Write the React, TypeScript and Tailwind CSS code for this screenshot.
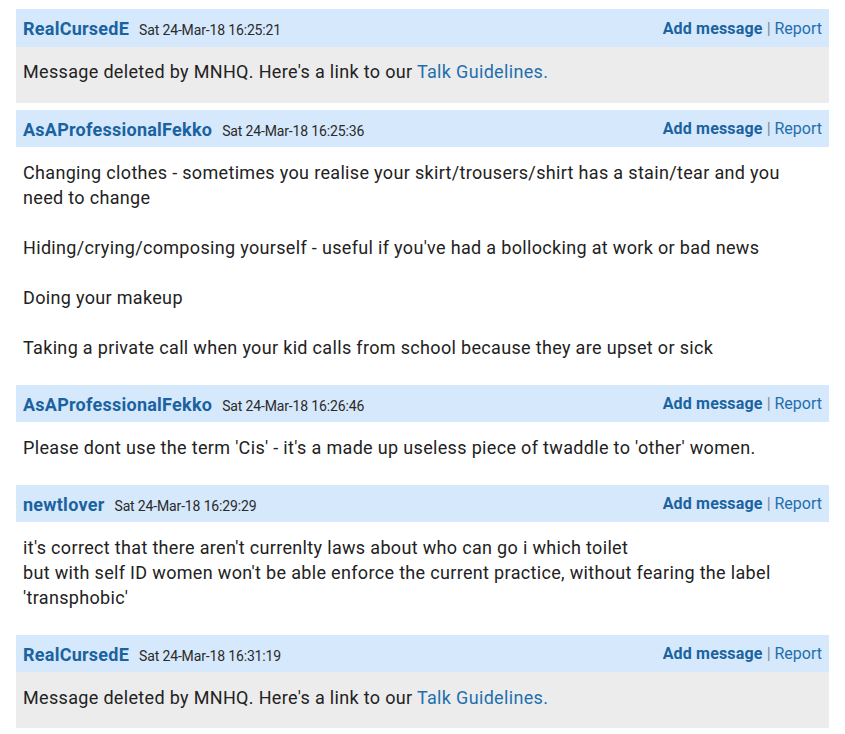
import React from "react";

type Post = {
  name: string;
  date: string;
  deleted?: boolean;
  body?: React.ReactNode;
};

const posts: Post[] = [
  { name: "RealCursedE", date: "Sat 24-Mar-18 16:25:21", deleted: true },
  {
    name: "AsAProfessionalFekko",
    date: "Sat 24-Mar-18 16:25:36",
    body: (
      <>
        Changing clothes - sometimes you realise your skirt/trousers/shirt has a stain/tear and you need to change
        <br />
        <br />
        Hiding/crying/composing yourself - useful if you've had a bollocking at work or bad news
        <br />
        <br />
        Doing your makeup
        <br />
        <br />
        Taking a private call when your kid calls from school because they are upset or sick
      </>
    ),
  },
  {
    name: "AsAProfessionalFekko",
    date: "Sat 24-Mar-18 16:26:46",
    body: <>Please dont use the term 'Cis' - it's a made up useless piece of twaddle to 'other' women.</>,
  },
  {
    name: "newtlover",
    date: "Sat 24-Mar-18 16:29:29",
    body: (
      <>
        it's correct that there aren't currenlty laws about who can go i which toilet
        <br />
        but with self ID women won't be able enforce the current practice, without fearing the label 'transphobic'
      </>
    ),
  },
  { name: "RealCursedE", date: "Sat 24-Mar-18 16:31:19", deleted: true },
];

export default function App() {
  return (
    <div
      className="bg-white w-[845px] min-h-[734px] px-4 pt-[9px]"
      style={{ fontFamily: "Roboto, 'Liberation Sans', sans-serif" }}
    >
      {posts.map((p, i) => (
        <div key={i} className="mb-[7px]">
          <div className="h-[37.5px] bg-[#d6e8fb] flex items-center justify-between pl-[7px] pr-[7px] pt-[1.5px]">
            <div className="flex items-baseline gap-[10px]">
              <span className="text-[18px] font-bold text-[#1a63a0] tracking-[0.25px]">{p.name}</span>
              <span className="text-[14px] text-[#2a2a2a] tracking-[-0.15px]">{p.date}</span>
            </div>
            <div className="text-[16px] text-[#1a63a0]">
              <span className="font-bold tracking-[0.18px]">Add message</span>
              <span className="text-[#7a8a99]"> | </span>
              <span className="text-[#1f6fae]">Report</span>
            </div>
          </div>
          <div
            className={`px-[7px] pt-[12.5px] text-[18px] leading-[25px] tracking-[0.33px] text-[#222] ${
              p.deleted ? "bg-[#ececec] pb-[18.5px]" : "bg-white pb-[18px]"
            }`}
          >
            {p.deleted ? (
              <>
                Message deleted by MNHQ. Here's a link to our{" "}
                <span className="text-[#1f6fae]">Talk Guidelines</span>
                <span className="text-[#1f6fae]">.</span>
              </>
            ) : (
              p.body
            )}
          </div>
        </div>
      ))}
    </div>
  );
}
